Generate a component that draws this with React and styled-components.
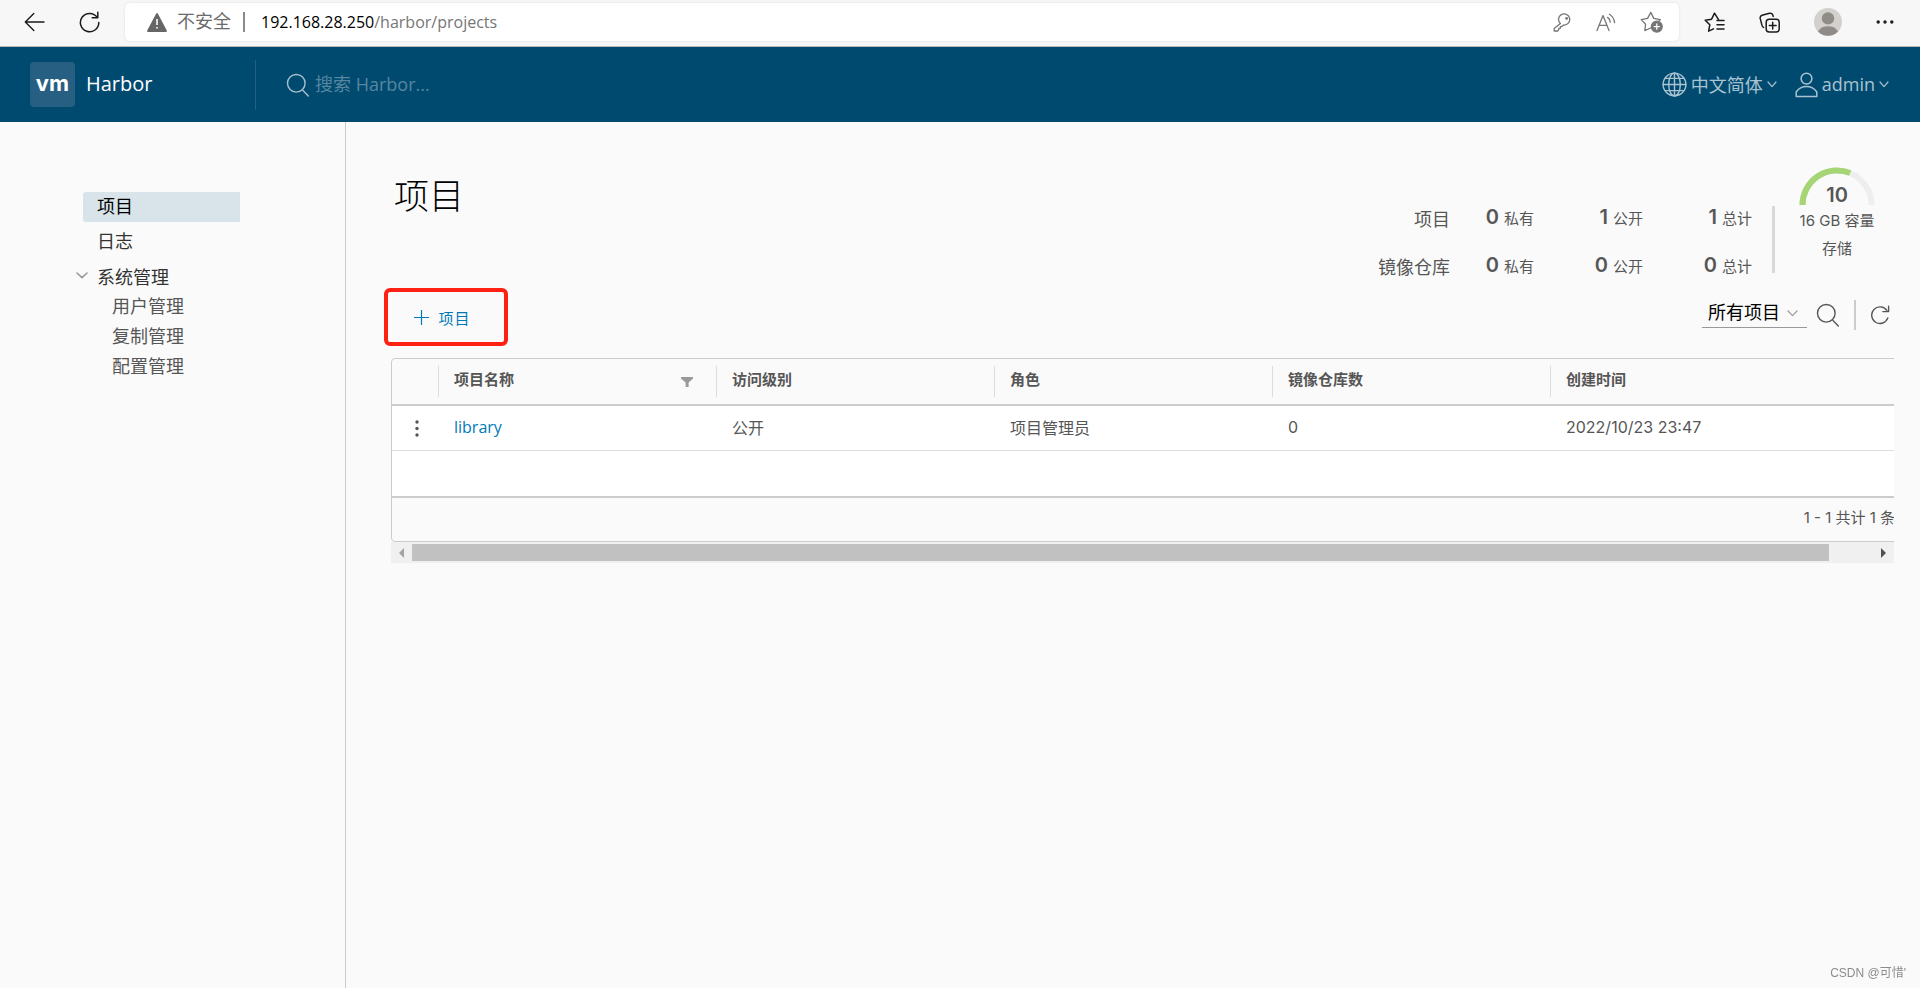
import React from "react";
import styled, { createGlobalStyle } from "styled-components";

const GlobalStyle = createGlobalStyle`
  * { box-sizing: border-box; }
  body {
    margin: 0;
    background: #fafafa;
    color: #565656;
    font-family: "Open Sans", "Noto Sans CJK SC", sans-serif;
    font-size: 16px;
  }
  button, input, select { font: inherit; color: inherit; }
  a { color: inherit; text-decoration: none; }
  svg { display: block; flex: none; }
`;

const figures = `font-family: Inter, "Noto Sans CJK SC", sans-serif;`;

/* Browser bar */
const BrowserBar = styled.div`
  display: flex;
  align-items: flex-start;
  height: 47px;
  padding-top: 3px;
  background: #f7f7f7;
  border-bottom: 1px solid #b9b9b9;
`;
const BarGroup = styled.div`
  display: flex;
  align-items: center;
  height: 38px;
  gap: ${(p) => p.$gap}px;
  padding: 0 ${(p) => p.$end}px 0 ${(p) => p.$start}px;
`;
const IconButton = styled.button`
  display: flex;
  align-items: center;
  justify-content: center;
  flex: none;
  padding: 0;
  border: 0;
  background: none;
  color: ${(p) => p.$tone || "#1b1b1b"};
  cursor: pointer;
`;
const AddressBox = styled.div`
  display: flex;
  align-items: center;
  flex: 1;
  height: 38px;
  padding: 0 16px 0 22px;
  background: #fff;
  border-radius: 5px;
  box-shadow: 0 0 3px rgba(0, 0, 0, 0.1);
`;
const Unsafe = styled.span`
  padding: 0 12px 2px 10px;
  color: #6b6b6b;
  font-size: 18px;
  line-height: 24px;
`;
const Bar = styled.span`
  flex: none;
  width: ${(p) => p.$w || 1}px;
  height: ${(p) => p.$h}px;
  background: ${(p) => p.$color};
`;
const Address = styled.div`
  flex: 1;
  padding: 0 0 1px 16px;
  color: #767676;
  line-height: 24px;
  b { color: #000; font-weight: 400; }
`;

/* Application header */
const Header = styled.header`
  display: flex;
  align-items: center;
  height: 75px;
  padding: 0 31px 0 30px;
  background: #004a70;
  color: #fff;
`;
const Brand = styled.a`
  display: flex;
  align-items: center;
  gap: 11px;
  width: 225px;
  font-size: 20px;
`;
const HeaderText = styled.span`
  padding-bottom: 2px;
`;
const Logo = styled.span`
  width: 45px;
  height: 45px;
  border-radius: 4px;
  background: #265f81;
  font: 700 22px/42px Inter, sans-serif;
  text-align: center;
`;
const Search = styled.label`
  display: flex;
  align-items: center;
  gap: 5px;
  flex: 1;
  padding-left: 30px;
  color: #a6c0cf;
  input {
    flex: 1;
    padding: 0 0 2px;
    border: 0;
    outline: 0;
    background: none;
    font-size: 18px;
  }
  input::placeholder { color: #5686a0; opacity: 1; }
`;
const MenuButton = styled(IconButton)`
  gap: 4px;
  margin-left: 18px;
  color: #a9c3d1;
  font-size: 18px;
`;

/* Page body */
const Body = styled.div`
  display: flex;
  min-height: calc(100vh - 122px);
`;
const Sidebar = styled.nav`
  flex: none;
  width: 346px;
  padding: 70px 105px 0 73px;
  border-right: 1px solid #ccc;
  font-size: 18px;
`;
const NavLink = styled.a`
  display: block;
  height: 30px;
  margin: 0 0 5px 10px;
  padding-left: 14px;
  border-radius: 3px 0 0 3px;
  line-height: 29px;
  color: ${(p) => (p.$active ? "#000" : "#333")};
  background: ${(p) => (p.$active ? "#d9e4ea" : "none")};
`;
const NavGroup = styled.button`
  display: flex;
  align-items: center;
  gap: 9px;
  height: 29px;
  padding: 0 0 2px 3px;
  border: 0;
  background: none;
  color: #333;
  svg { color: #999; }
`;
const SubLink = styled.a`
  display: block;
  padding-left: 39px;
  line-height: 30px;
`;
const Main = styled.main`
  flex: 1;
  min-width: 0;
  padding: 45px 26px 40px 45px;
`;
const Top = styled.div`
  display: flex;
  height: 109px;
`;
const Title = styled.h1`
  flex: 1;
  margin: 0;
  padding-left: 3px;
  color: #000;
  font-size: 35px;
  font-weight: 300;
  line-height: 58px;
`;
const Stats = styled.div`
  display: grid;
  grid-template-columns: auto 84px 109px 109px;
  grid-auto-rows: 22px;
  row-gap: 26px;
  align-content: start;
  margin: 39px 0 0;
  padding-right: 20px;
  text-align: right;
`;
const StatLabel = styled.div`
  font-size: 18px;
  line-height: 26px;
`;
const Stat = styled.div`
  ${figures}
  display: flex;
  align-items: baseline;
  justify-content: flex-end;
  gap: 5px;
  font-size: 15px;
  line-height: 22px;
  b { font-size: 20px; font-weight: 600; }
`;
const StatDivider = styled(Bar)`
  margin-top: 39px;
`;
const Storage = styled.div`
  ${figures}
  position: relative;
  width: 80px;
  margin: 0 17px 0 22px;
  font-size: 15px;
  line-height: 28px;
  text-align: center;
  white-space: nowrap;
  svg { margin: 0 auto 2px; }
`;
const Used = styled.b`
  position: absolute;
  top: 14px;
  left: 0;
  width: 100%;
  font-size: 20px;
  font-weight: 600;
`;
const Toolbar = styled.div`
  display: flex;
  justify-content: space-between;
  margin: 12px 0;
`;
const Highlight = styled.div`
  width: 124px;
  height: 58px;
  margin-left: -7px;
  border: 4px solid #ff2014;
  border-radius: 6px;
`;
const NewButton = styled(IconButton)`
  gap: 9px;
  width: 100%;
  height: 100%;
  padding-right: 7px;
  color: #0079b8;
  font-size: 15px;
  letter-spacing: 1px;
`;
const Filters = styled.div`
  display: flex;
  align-items: center;
  gap: 14px;
  height: 30px;
  margin-top: 12px;
  padding-right: 4px;
`;
const SelectBox = styled.div`
  position: relative;
  align-self: flex-start;
  width: 105px;
  margin-right: -5px;
  select {
    appearance: none;
    width: 100%;
    height: 28px;
    padding: 0 0 3px 6px;
    border: 0;
    border-bottom: 1px solid #999;
    border-radius: 0;
    background: none;
    color: #000;
    font-size: 18px;
  }
  svg {
    position: absolute;
    right: 9px;
    top: 10px;
    color: #999;
    pointer-events: none;
  }
`;

/* Data grid */
const Viewport = styled.div`
  overflow: hidden;
`;
const Grid = styled.div`
  width: calc(100% + 48px);
  border: 1px solid #ccc;
  border-radius: 4px;
`;
const Table = styled.table`
  width: 100%;
  table-layout: fixed;
  border-collapse: separate;
  border-spacing: 0;
  border-bottom: 2px solid #ccc;
  th, td { padding: 0; text-align: left; }
  th {
    height: 47px;
    border-bottom: 2px solid #ccc;
    font-size: 15px;
  }
  td {
    height: 45px;
    padding: 0 0 3px 16px;
    background: #fff;
    border-bottom: 1px solid #ddd;
  }
  td:first-child { padding: 0 0 0 23px; }
`;
const EmptyRow = styled.tr`
  && td { border-bottom: 0; }
`;
const Col = styled.col`
  width: ${(p) => p.$w};
`;
const HeadCell = styled.div`
  display: flex;
  align-items: center;
  justify-content: space-between;
  height: 31px;
  padding: 0 23px 0 15px;
  border-left: 1px solid #ddd;
  line-height: 20px;
  span { padding-bottom: 5px; }
`;
const ProjectLink = styled.a`
  color: #0079b8;
`;
const Figure = styled.span`
  ${figures}
`;
const GridFooter = styled.div`
  ${figures}
  height: 43px;
  padding-right: 46px;
  font-size: 15px;
  line-height: 39px;
  text-align: right;
`;
const Scrollbar = styled.div`
  display: flex;
  align-items: center;
  height: 21px;
  padding: 0 8px;
  background: #f0f0f0;
`;
const Track = styled.div`
  flex: 1;
  margin: 0 8px;
`;
const Thumb = styled.div`
  width: 97%;
  height: 17px;
  background: #c1c1c1;
`;
const Watermark = styled.div`
  position: fixed;
  right: 14px;
  bottom: 6px;
  color: #8c8c8c;
  font: 12px/18px "Liberation Sans", "Noto Sans CJK SC", sans-serif;
`;

const Svg = ({ w, h, sw = 1, children }) => (
  <svg width={w} height={h} viewBox={`0 0 ${w} ${h}`} fill="none" stroke="currentColor"
    strokeWidth={sw} strokeLinecap="round" strokeLinejoin="round" aria-hidden="true">
    {children}
  </svg>
);
const Chevron = ({ w = 10, sw = 1.2 }) => (
  <Svg w={w} h={7} sw={sw}><path d={`M1 1 L${w / 2} 5.6 L${w - 1} 1`} /></Svg>
);
const Magnifier = () => (
  <Svg w={24} h={24} sw={1.4}><circle cx="10.3" cy="10.3" r="8.8" /><path d="M17 17.5 L22.3 23" /></Svg>
);
const STAR = "M14.5 7.6 L10.5 1.2 L7.6 7.2 L1.2 8.2 L5.8 12.8 L4.6 19.2 L9.5 16.8";

export default function App() {
  return (
    <>
      <GlobalStyle />
      <BrowserBar>
        <BarGroup $gap={34} $start={24} $end={25}>
          <IconButton aria-label="后退">
            <Svg w={21} h={20} sw={1.4}><path d="M20 10 H1.5 M9.8 1.5 L1.3 10 L9.8 18.5" /></Svg>
          </IconButton>
          <IconButton aria-label="刷新">
            <Svg w={21} h={22} sw={1.5}><path d="M18.2 6.4 A9.2 9.2 0 1 0 19.8 11.5 M18.8 1.2 V6.8 H13.2" /></Svg>
          </IconButton>
        </BarGroup>
        <AddressBox>
          <svg width="20" height="19" viewBox="0 0 20 19" aria-hidden="true">
            <path d="M10 1 L19 18 H1 Z" fill="#666" stroke="#666" strokeWidth="1.8" strokeLinejoin="round" />
            <path d="M10 6 V12 M10 14 V15.6" stroke="#fff" strokeWidth="1.6" />
          </svg>
          <Unsafe>不安全</Unsafe>
          <Bar $w={2} $h={20} $color="#8a8a8a" />
          <Address><b>192.168.28.250</b>/harbor/projects</Address>
          <BarGroup $gap={24} $start={0} $end={0}>
            <IconButton $tone="#767676" aria-label="密码">
              <Svg w={19} h={19} sw={1.3}>
                <path d="M7.4 10.6 A5.6 5.6 0 1 1 10.6 12 L8.8 13.6 H7.4 V15.2 L5.8 15.4 V16.8 L4.6 18 H1.2 V15.4 Z" />
                <circle cx="13.6" cy="5.4" r="0.8" />
              </Svg>
            </IconButton>
            <IconButton $tone="#767676" aria-label="朗读">
              <Svg w={20} h={19} sw={1.3}>
                <path d="M1 17.6 L7 2.6 L13 17.6 M3.2 12.4 H10.9 M11.6 4.4 Q14 6 14.2 9 M13.4 1.2 Q18 4 18.6 9.6" />
              </Svg>
            </IconButton>
            <IconButton $tone="#767676" aria-label="收藏">
              <Svg w={23} h={22} sw={1.3}>
                <path d="M10.6 17 L4.8 19.6 L5.6 13.2 L1.2 8.6 L7.6 7.4 L10.8 1.4 L13.8 7.4 L20.4 8.6 L19 10" />
                <circle cx="16.8" cy="15.6" r="5.4" fill="currentColor" />
                <path d="M16.8 13 V18.2 M14.2 15.6 H19.4" stroke="#fff" />
              </Svg>
            </IconButton>
          </BarGroup>
        </AddressBox>
        <BarGroup $gap={34} $start={25} $end={26}>
          <IconButton aria-label="收藏夹">
            <Svg w={21} h={21} sw={1.5}><path d={STAR} /><path d="M13 8.6 H20 M13 12.8 H20 M13 17 H20" /></Svg>
          </IconButton>
          <IconButton aria-label="集锦">
            <Svg w={21} h={21} sw={1.5}>
              <rect x="7.2" y="7.2" width="13" height="12.8" rx="3" />
              <path d="M13.7 10.2 V17 M10.3 13.6 H17.1 M4.6 15.4 Q3.4 14.8 3 13.4 L1.2 6.4 Q0.8 4 3 3.2 L10.6 1.2 Q13 0.8 13.8 3 L14.2 4.4" />
            </Svg>
          </IconButton>
          <IconButton aria-label="个人资料">
            <svg width="28" height="28" viewBox="0 0 28 28" aria-hidden="true">
              <circle cx="14" cy="14" r="14" fill="#d3d1ce" />
              <circle cx="14" cy="10.4" r="6.2" fill="#8f8b87" />
              <path d="M4 23.6 Q7 18.2 14 18.2 Q21 18.2 24 23.6 A14 14 0 0 1 4 23.6" fill="#8f8b87" />
            </svg>
          </IconButton>
          <IconButton aria-label="更多">
            <svg width="18" height="4" viewBox="0 0 18 4" fill="currentColor" aria-hidden="true">
              <circle cx="2.2" cy="2" r="1.7" /><circle cx="9" cy="2" r="1.7" /><circle cx="15.8" cy="2" r="1.7" />
            </svg>
          </IconButton>
        </BarGroup>
      </BrowserBar>

      <Header>
        <Brand href="#"><Logo>vm</Logo><HeaderText>Harbor</HeaderText></Brand>
        <Bar $h={50} $color="#245f80" />
        <Search>
          <Magnifier />
          <input type="text" placeholder="搜索 Harbor..." aria-label="搜索 Harbor" />
        </Search>
        <MenuButton>
          <Svg w={25} h={25} sw={1.4}>
            <circle cx="12.5" cy="12.5" r="11.4" />
            <ellipse cx="12.5" cy="12.5" rx="5.8" ry="11.4" />
            <path d="M12.5 1.1 V23.9 M1.1 12.5 H23.9 M3.4 6.4 H21.6 M3.4 18.6 H21.6" />
          </Svg>
          <HeaderText>中文简体</HeaderText>
          <Chevron />
        </MenuButton>
        <MenuButton>
          <Svg w={23} h={26} sw={1.5}>
            <circle cx="11.5" cy="6.6" r="5.4" />
            <path d="M1.2 24.6 V20 Q5 14.6 11.5 14.6 Q18 14.6 21.8 20 V24.6 Z" />
          </Svg>
          <HeaderText>admin</HeaderText>
          <Chevron />
        </MenuButton>
      </Header>

      <Body>
        <Sidebar>
          <NavLink href="#" $active>项目</NavLink>
          <NavLink href="#">日志</NavLink>
          <NavGroup><Chevron w={12} sw={1.6} />系统管理</NavGroup>
          <SubLink href="#">用户管理</SubLink>
          <SubLink href="#">复制管理</SubLink>
          <SubLink href="#">配置管理</SubLink>
        </Sidebar>
        <Main>
          <Top>
            <Title>项目</Title>
            <Stats>
              <StatLabel>项目</StatLabel>
              <Stat><b>0</b>私有</Stat>
              <Stat><b>1</b>公开</Stat>
              <Stat><b>1</b>总计</Stat>
              <StatLabel>镜像仓库</StatLabel>
              <Stat><b>0</b>私有</Stat>
              <Stat><b>0</b>公开</Stat>
              <Stat><b>0</b>总计</Stat>
            </Stats>
            <StatDivider $w={3} $h={67} $color="#d8d8d8" />
            <Storage>
              <svg width="76" height="38" viewBox="0 0 76 38" fill="none" strokeWidth="6" aria-hidden="true">
                <path d="M3.5 38 A34.5 34.5 0 0 1 72.5 38" stroke="#eee" />
                <path d="M3.5 38 A34.5 34.5 0 0 1 51.2 6.1" stroke="#a5d575" />
              </svg>
              <Used>10</Used>
              <div>16 GB 容量</div>
              <div>存储</div>
            </Storage>
          </Top>
          <Toolbar>
            <Highlight>
              <NewButton>
                <Svg w={15} h={15} sw={1.2}><path d="M7.5 0.5 V14.5 M0.5 7.5 H14.5" /></Svg>
                项目
              </NewButton>
            </Highlight>
            <Filters>
              <SelectBox>
                <select aria-label="项目筛选"><option>所有项目</option></select>
                <Chevron w={11} />
              </SelectBox>
              <IconButton $tone="#565656" aria-label="搜索"><Magnifier /></IconButton>
              <Bar $w={2} $h={30} $color="#ccc" />
              <IconButton $tone="#565656" aria-label="刷新列表">
                <Svg w={20} h={20} sw={1.4}><path d="M16.8 5.4 A8.3 8.3 0 1 0 17.8 13 M18.6 1.2 V6.6 H12.8" /></Svg>
              </IconButton>
            </Filters>
          </Toolbar>
          <Viewport>
            <Grid>
              <Table>
                <colgroup>
                  <Col $w="46px" /><Col $w="278px" /><Col $w="278px" /><Col $w="278px" /><Col $w="278px" /><Col $w="auto" />
                </colgroup>
                <thead>
                  <tr>
                    <th aria-label="操作" />
                    <th>
                      <HeadCell>
                        <span>项目名称</span>
                        <svg width="12" height="10" viewBox="0 0 12 10" fill="#999" aria-hidden="true">
                          <path d="M0 0 H12 V1.6 L7.6 5.4 V10 H4.6 V5.4 L0 1.6 Z" />
                        </svg>
                      </HeadCell>
                    </th>
                    <th><HeadCell><span>访问级别</span></HeadCell></th>
                    <th><HeadCell><span>角色</span></HeadCell></th>
                    <th><HeadCell><span>镜像仓库数</span></HeadCell></th>
                    <th><HeadCell><span>创建时间</span></HeadCell></th>
                  </tr>
                </thead>
                <tbody>
                  <tr>
                    <td>
                      <IconButton $tone="#565656" aria-label="项目操作">
                        <svg width="4" height="17" viewBox="0 0 4 17" fill="currentColor" aria-hidden="true">
                          <circle cx="2" cy="2" r="1.7" /><circle cx="2" cy="8.5" r="1.7" /><circle cx="2" cy="15" r="1.7" />
                        </svg>
                      </IconButton>
                    </td>
                    <td><ProjectLink href="#">library</ProjectLink></td>
                    <td>公开</td>
                    <td>项目管理员</td>
                    <td><Figure>0</Figure></td>
                    <td><Figure>2022/10/23 23:47</Figure></td>
                  </tr>
                  <EmptyRow><td colSpan={6} /></EmptyRow>
                </tbody>
              </Table>
              <GridFooter>1 - 1 共计 1 条</GridFooter>
            </Grid>
            <Scrollbar>
              <svg width="5" height="10" viewBox="0 0 5 10" fill="#a3a3a3" aria-hidden="true"><path d="M5 0 V10 L0 5 Z" /></svg>
              <Track><Thumb /></Track>
              <svg width="5" height="10" viewBox="0 0 5 10" fill="#505050" aria-hidden="true"><path d="M0 0 V10 L5 5 Z" /></svg>
            </Scrollbar>
          </Viewport>
        </Main>
      </Body>
      <Watermark>CSDN @可惜'</Watermark>
    </>
  );
}
